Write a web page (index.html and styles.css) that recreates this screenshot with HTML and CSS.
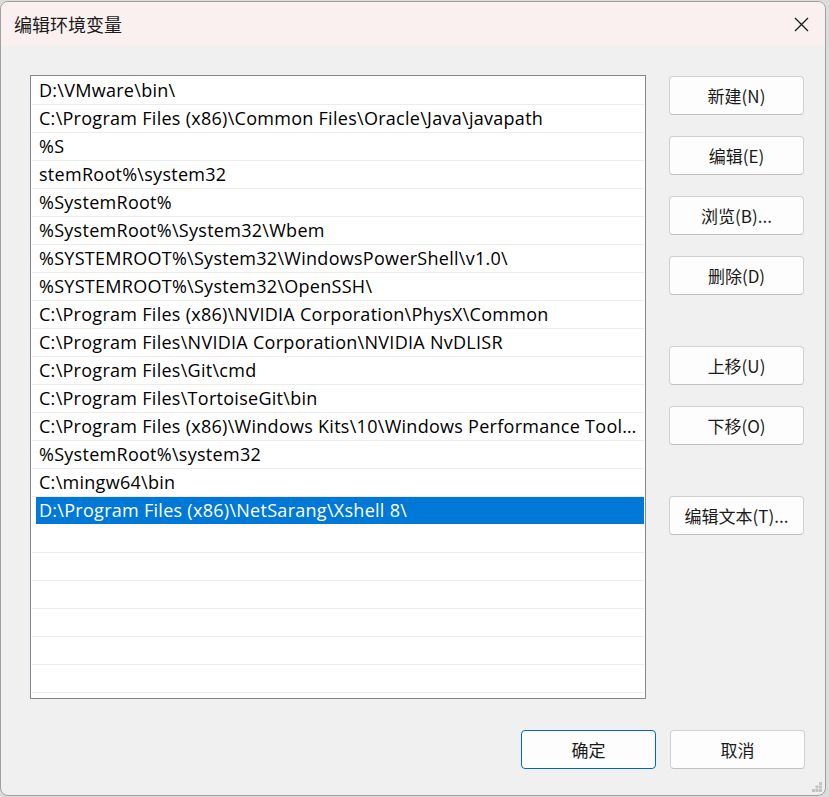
FILE: index.html
```html
<!DOCTYPE html>
<html lang="zh-CN">
<head>
    <meta charset="UTF-8">
    <meta name="viewport" content="width=device-width, initial-scale=1.0">
    <title>编辑环境变量</title>
    <link rel="stylesheet" href="styles.css">
</head>
<body>
    <div class="window">
        <div class="titlebar">
            <span class="title">编辑环境变量</span>
            <span class="close">
                <svg width="15" height="15" viewBox="0 0 15 15">
                    <path d="M1 1 L14 14 M14 1 L1 14" stroke="#1b1b1b" stroke-width="1.3" fill="none"/>
                </svg>
            </span>
        </div>

        <div class="content">
            <div class="main">
                <div class="list">
                    <div class="row"><div class="cell">D:\VMware\bin\</div></div>
                    <div class="row"><div class="cell">C:\Program Files (x86)\Common Files\Oracle\Java\javapath</div></div>
                    <div class="row"><div class="cell">%S</div></div>
                    <div class="row"><div class="cell">stemRoot%\system32</div></div>
                    <div class="row"><div class="cell">%SystemRoot%</div></div>
                    <div class="row"><div class="cell">%SystemRoot%\System32\Wbem</div></div>
                    <div class="row"><div class="cell">%SYSTEMROOT%\System32\WindowsPowerShell\v1.0\</div></div>
                    <div class="row"><div class="cell">%SYSTEMROOT%\System32\OpenSSH\</div></div>
                    <div class="row"><div class="cell">C:\Program Files (x86)\NVIDIA Corporation\PhysX\Common</div></div>
                    <div class="row"><div class="cell">C:\Program Files\NVIDIA Corporation\NVIDIA NvDLISR</div></div>
                    <div class="row"><div class="cell">C:\Program Files\Git\cmd</div></div>
                    <div class="row"><div class="cell">C:\Program Files\TortoiseGit\bin</div></div>
                    <div class="row"><div class="cell">C:\Program Files (x86)\Windows Kits\10\Windows Performance Toolkit\</div></div>
                    <div class="row"><div class="cell">%SystemRoot%\system32</div></div>
                    <div class="row"><div class="cell">C:\mingw64\bin</div></div>
                    <div class="row selected"><div class="cell">D:\Program Files (x86)\NetSarang\Xshell 8\</div></div>
                    <div class="row"><div class="cell"></div></div>
                    <div class="row"><div class="cell"></div></div>
                    <div class="row"><div class="cell"></div></div>
                    <div class="row"><div class="cell"></div></div>
                    <div class="row"><div class="cell"></div></div>
                    <div class="row"><div class="cell"></div></div>
                    <div class="row"><div class="cell"></div></div>
                </div>

                <div class="side">
                    <button class="btn">新建(N)</button>
                    <button class="btn">编辑(E)</button>
                    <button class="btn">浏览(B)...</button>
                    <button class="btn">删除(D)</button>
                    <button class="btn group">上移(U)</button>
                    <button class="btn">下移(O)</button>
                    <button class="btn group">编辑文本(T)...</button>
                </div>
            </div>

            <div class="footer">
                <button class="btn default">确定</button>
                <button class="btn">取消</button>
            </div>
        </div>

        <svg class="grip" width="10" height="10" viewBox="0 0 10 10">
            <rect x="7" y="0" width="3" height="3" fill="#c4c4c4"/>
            <rect x="3.5" y="3.5" width="3" height="3" fill="#c4c4c4"/>
            <rect x="7" y="3.5" width="3" height="3" fill="#c4c4c4"/>
            <rect x="0" y="7" width="3" height="3" fill="#c4c4c4"/>
            <rect x="3.5" y="7" width="3" height="3" fill="#c4c4c4"/>
            <rect x="7" y="7" width="3" height="3" fill="#c4c4c4"/>
        </svg>
    </div>
</body>
</html>
```

FILE: styles.css
```css
body {
    margin: 0;
    background-color: #dcdcdc;
    font-family: "Open Sans", "Noto Sans CJK SC", sans-serif;
    color: #000;
}

.window {
    position: relative;
    width: 826px;
    height: 795px;
    margin-top: 1px;
    box-sizing: border-box;
    border: 1px solid #a0a0a0;
    border-radius: 8px;
    background-color: #f0f0f0;
    overflow: hidden;
}

.titlebar {
    display: flex;
    align-items: center;
    justify-content: space-between;
    height: 44px;
    padding: 0 14px 0 13px;
    background-color: #f9f0ef;
}

.title {
    font-family: "Noto Sans CJK SC", sans-serif;
    font-size: 18px;
    color: #1a1a1a;
}

.close {
    display: flex;
    width: 15px;
    height: 15px;
    margin-right: 2px;
}

.content {
    padding: 29px 20px 0 29px;
}

.main {
    display: flex;
    gap: 23px;
}

.list {
    width: 616px;
    height: 624px;
    box-sizing: border-box;
    border: 1px solid #82878f;
    padding: 1px 1px 0;
    background-color: #fff;
    overflow: hidden;
}

.row {
    height: 27px;
    border-bottom: 1px solid #ececec;
}

.cell {
    height: 27px;
    margin-left: 4px;
    padding-left: 3px;
    padding-right: 1px;
    font-size: 18px;
    letter-spacing: 0.28px;
    line-height: 27px;
    white-space: nowrap;
    overflow: hidden;
    text-overflow: ellipsis;
}

.row.selected {
    border-bottom-color: #fff;
}

.row.selected .cell {
    background-color: #0078d7;
    color: #fff;
}

.side {
    display: flex;
    flex-direction: column;
    gap: 21px;
    padding-top: 1px;
}

.btn {
    width: 135px;
    height: 39px;
    box-sizing: border-box;
    border: 1px solid #d0d0d0;
    border-bottom-color: #c0c0c0;
    border-radius: 4px;
    background-color: #fdfdfd;
    font-family: "Noto Sans CJK SC", sans-serif;
    font-size: 17px;
    color: #1a1a1a;
    padding: 0;
}

.btn.group {
    margin-top: 30px;
}

.btn.default {
    border-color: #0067c0;
}

.footer {
    display: flex;
    justify-content: flex-end;
    gap: 14px;
    margin-top: 31px;
}

.grip {
    position: absolute;
    right: 3px;
    bottom: 3px;
}
```
